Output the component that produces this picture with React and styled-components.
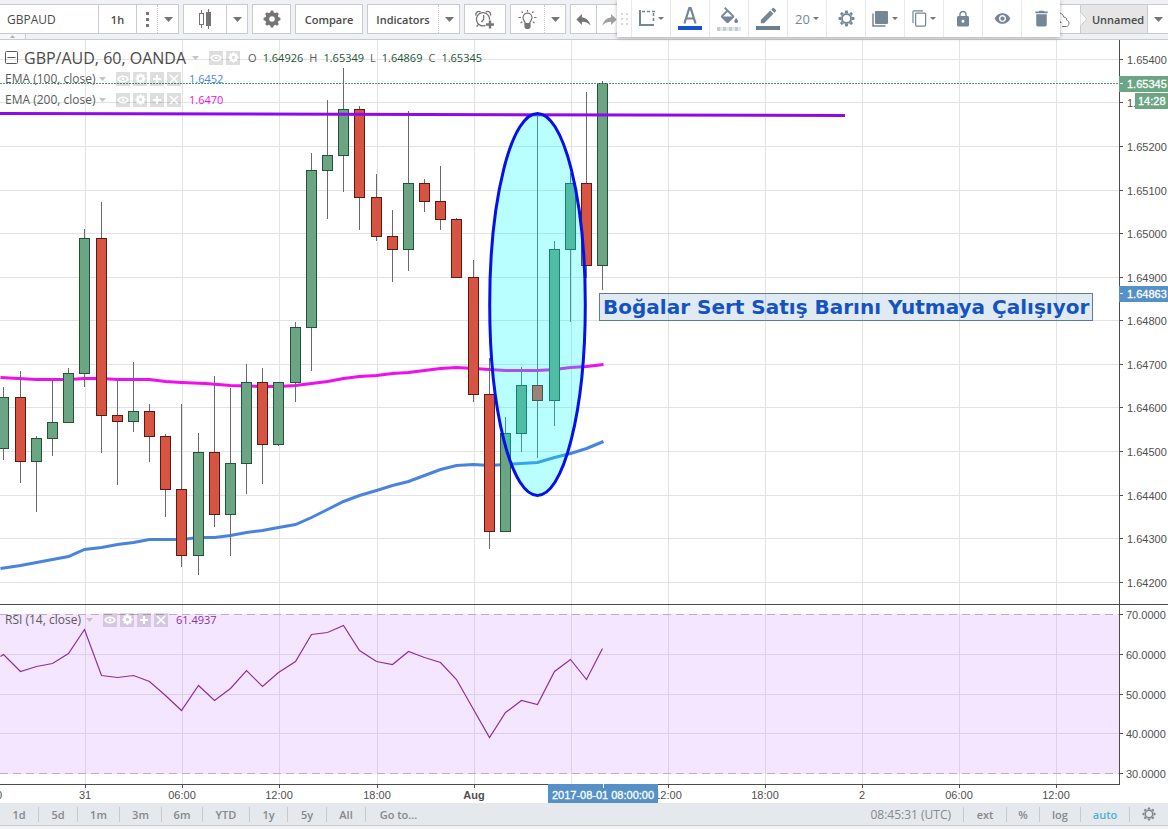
import React from "react";
import styled, { createGlobalStyle, css } from "styled-components";
import { MdLock, MdDelete, MdVisibility, MdFormatColorFill, MdEdit, MdReply } from "react-icons/md";

const ui = '"Open Sans", "Noto Sans", sans-serif';
const axisFont = '"Liberation Sans", Arial, sans-serif';

const GlobalStyle = createGlobalStyle`
  * { box-sizing: border-box; }
  body { margin: 0; background: #f1f3f6; font-family: ${ui}; font-size: 11px; color: #4a4a4a; overflow-x: hidden; }
  button, input { font: inherit; color: inherit; margin: 0; }
  svg { display: block; flex: none; }
`;

const Page = styled.div`
  position: relative;
  display: flex;
  flex-direction: column;
  min-height: 100vh;
`;

/* ---------- top toolbar ---------- */

const TopBar = styled.header`
  position: relative;
  display: flex;
  align-items: flex-start;
  gap: 4px;
  height: 40px;
  padding-top: 4px;
  background: #f0f1f5;
  border-bottom: 1px solid #c9cbcd;
`;

const Group = styled.div`
  display: flex;
  flex: none;
  height: 30px;
  background: #fff;
  border: 1px solid #c9cbcd;
  ${(p) => p.$flushLeft && css`border-left: 0;`}
  ${(p) => p.$flushRight && css`border-right: 0;`}
`;

const SymbolInput = styled.input`
  width: 98px;
  padding: 0 7px;
  border: 0;
  outline: 0;
  background: transparent;
  font-size: 12px;
`;

const ToolButton = styled.button`
  display: flex;
  align-items: center;
  justify-content: center;
  width: ${(p) => p.$w}px;
  padding: 0;
  border: 0;
  border-left: ${(p) => (p.$divider ? `1px ${p.$divider} #c9cbcd` : "0")};
  background: transparent;
  color: ${(p) => (p.$icon ? "#757575" : "#4a4a4a")};
  font-weight: 600;
`;

const Spacer = styled.div`
  flex: 1;
`;

const LayoutName = styled.button`
  position: relative;
  width: 67px;
  padding: 0 0 0 8px;
  border: 0;
  border-left: 1px solid #c9cbcd;
  background: #e6e6e6;
  color: #4a4a4a;
  font-weight: 600;
`;

const Notch = styled.svg`
  position: absolute;
  left: -1px;
  top: 7px;
`;

const CollapseTab = styled.button`
  position: absolute;
  left: 0;
  bottom: 0;
  display: flex;
  align-items: center;
  justify-content: center;
  width: 26px;
  height: 5px;
  padding: 0;
  border: 0;
  border-right: 1px solid #c9cbcd;
  background: #f6f7f9;
`;

/* ---------- floating drawing toolbar ---------- */

const FloatingBar = styled.div`
  position: absolute;
  top: 0;
  right: 108px;
  z-index: 3;
  display: flex;
  height: 37px;
  background: #fff;
  box-shadow: 0 1px 4px rgba(0, 0, 0, 0.3);
  color: #758696;
`;

const Grip = styled.div`
  display: grid;
  grid-template-columns: repeat(2, 2px);
  gap: 3px;
  align-content: center;
  justify-content: center;
  width: 14px;
`;

const GripDot = styled.i`
  height: 2px;
  background: #d5d8db;
`;

const FloatButton = styled.button`
  display: flex;
  flex-direction: ${(p) => (p.$stack ? "column" : "row")};
  align-items: center;
  justify-content: center;
  gap: ${(p) => (p.$stack ? 2 : 3)}px;
  width: 39px;
  padding: 0;
  border: 0;
  border-left: 1px solid #e6e8ea;
  background: transparent;
  font-size: 13px;
`;

const Swatch = styled.span`
  width: 24px;
  height: 4px;
  background: ${(p) => p.$color};
`;

/* ---------- chart ---------- */

const Pane = styled.section`
  position: relative;
  display: flex;
  background: #fff;
  ${(p) => p.$ruled && css`border-bottom: 1px solid #4c4c4c;`}
`;

const Plot = styled.svg`
  flex: 1;
  min-width: 0;
`;

const PriceScale = styled.svg`
  width: 49px;
  font: 11px ${axisFont};
  fill: #4f4f4f;
`;

const TimeScale = styled.svg`
  width: 100%;
  background: #fff;
  font: 11px ${axisFont};
  fill: #4f4f4f;
`;

const Legend = styled.div`
  position: absolute;
  left: 5px;
  top: ${(p) => p.$top}px;
`;

const LegendRow = styled.div`
  display: flex;
  align-items: center;
  height: 21px;
  white-space: nowrap;
  color: #5a5a5a;
`;

const SeriesTitle = styled.h1`
  margin: 0 6px 0 6px;
  font-size: 16px;
  line-height: 20px;
  font-weight: 400;
  color: #4a4a4a;
`;

const StudyName = styled.span`
  width: ${(p) => p.$w}px;
  font-size: 12px;
`;

const Chips = styled.div`
  display: flex;
  gap: 3px;
  margin-left: 10px;
`;

const Chip = styled.button`
  display: flex;
  align-items: center;
  justify-content: center;
  width: 14px;
  height: 14px;
  padding: 0;
  border: 0;
  background: rgba(0, 0, 0, 0.13);
  color: #fff;
`;

const Value = styled.span`
  margin-left: 8px;
  color: ${(p) => p.$color};
`;

const Ohlc = styled.span`
  display: flex;
  gap: 6px;
  margin-left: 8px;
  b { font-weight: 400; color: #225437; }
`;

const Note = styled.div`
  position: absolute;
  left: 599px;
  top: 253px;
  padding: 0 3px;
  border: 1px solid #5f7b8d;
  background: rgba(70, 130, 180, 0.17);
  color: #1553c0;
  font: bold 20px/26px "DejaVu Sans", Verdana, sans-serif;
  white-space: nowrap;
`;

/* ---------- bottom bar ---------- */

const BottomBar = styled.footer`
  display: flex;
  align-items: center;
  height: 23px;
  background: #e5e8ec;
  border-bottom: 1px solid #c9cbcd;
  color: #85888c;
`;

const BarButton = styled.button`
  display: flex;
  align-items: center;
  justify-content: center;
  width: ${(p) => p.$w}px;
  height: 15px;
  padding: 0;
  border: 0;
  border-left: ${(p) => (p.$first ? "0" : "1px solid #c6c9cd")};
  background: transparent;
  color: ${(p) => (p.$active ? "#4fb0d8" : "inherit")};
  font-weight: 600;
`;

const Clock = styled.time`
  margin-right: 12px;
  font-size: 12px;
`;

/* ---------- icons ---------- */

const Caret = ({ w = 9, up, color = "#757575" }) => {
  const h = Math.ceil(w / 2);
  return (
    <svg width={w} height={h} viewBox="0 0 10 5" preserveAspectRatio="none" fill={color}>
      <path d={up ? "M0 5L5 0L10 5Z" : "M0 0H10L5 5Z"} />
    </svg>
  );
};

const Gear = ({ size = 18, ring = 4 }) => (
  <svg width={size} height={size} viewBox="-9 -9 18 18" fill="none" stroke="currentColor">
    <circle r="4.8" strokeWidth={ring} />
    {[0, 45, 90, 135, 180, 225, 270, 315].map((a) => (
      <path key={a} d="M-1.9 -5.8L-1.2 -8.4H1.2L1.9 -5.8Z" fill="currentColor" stroke="none" transform={`rotate(${a})`} />
    ))}
  </svg>
);

const CandlesIcon = () => (
  <svg width="14" height="20" viewBox="0 0 14 20" fill="none" stroke="currentColor">
    <path d="M3.5 1V5M3.5 15V19M10.5 0V20" />
    <rect x="1.5" y="4.5" width="4" height="11" />
    <rect x="8.5" y="3.5" width="4" height="13" fill="currentColor" />
  </svg>
);

const AlarmIcon = () => (
  <svg width="20" height="19" viewBox="0 0 20 19" fill="none" stroke="currentColor" strokeWidth="1.3">
    <path d="M10.5 15.4A6.6 6.6 0 1 1 14.6 9.8M3.5 14.3L1.6 16.6M8.6 5V9.4L6.4 12" />
    <path d="M1 5.6C0.2 2.6 3 0.6 5.6 1.9M10.8 1.9C13.5 0.4 16.3 2.6 15.4 5.6" />
    <path d="M15 10.5V18.5M11 14.5H19" strokeWidth="2.4" />
  </svg>
);

const BulbIcon = () => (
  <svg width="19" height="19" viewBox="0 0 19 19" fill="none" stroke="currentColor" strokeWidth="1.2">
    <path d="M7.3 13.2C7.1 11.4 5 10.2 5 7.6A4.5 4.5 0 0 1 14 7.6C14 10.2 11.9 11.4 11.7 13.2" />
    <path d="M7 13.5H12V17L10.7 18.5H8.3L7 17Z" fill="currentColor" />
    <path d="M9.5 0V1.7M3.6 1.5L4.9 2.9M15.4 1.5L14.1 2.9M0.5 7.5H3M16 7.5H18.5M2.5 13L4.2 11.7M16.5 13L14.8 11.7" />
  </svg>
);

const CloudIcon = () => (
  <svg width="24" height="17" viewBox="0 0 24 17" fill="none" stroke="currentColor">
    <path d="M7 15.5H5A4 4 0 0 1 5 7.5C5 4 8 1.5 11.5 1.5C15 1.5 17.3 3.5 17.8 6.2C20 6 21 7.5 20.7 9.2C23.5 9.7 24 15 20.5 15.5H16" />
    <path d="M12 8L16 12H13.3V16.5H10.7V12H8Z" fill="currentColor" stroke="none" />
  </svg>
);

const ShapeIcon = () => (
  <svg width="17" height="17" viewBox="0 0 17 17" fill="none" stroke="currentColor" strokeWidth="2">
    <path d="M2 0V15H16" />
    <path d="M4 1.5H17M15.5 3V13" strokeDasharray="3 2" strokeWidth="1.6" />
  </svg>
);

const TextIcon = () => (
  <svg width="14" height="17" viewBox="0 0 14 17" fill="none" stroke="currentColor" strokeWidth="2.2">
    <path d="M1.4 16.5L6.3 1.2H7.700L12.600 16.500M3.400 11.500H10.600" />
  </svg>
);

const FrontIcon = () => (
  <svg width="17" height="16" viewBox="0 0 17 16">
    <rect x="3" y="0" width="13" height="13" rx="1" fill="currentColor" />
    <path d="M1 2.5V15H13.5" fill="none" stroke="currentColor" strokeWidth="1.5" />
  </svg>
);

const CopyIcon = () => (
  <svg width="15" height="17" viewBox="0 0 15 17" fill="none" stroke="currentColor" strokeWidth="1.2">
    <rect x="3.6" y="3.1" width="10" height="13" rx="1" />
    <path d="M1 13V2A1 1 0 0 1 2 0.8H11" />
  </svg>
);

const EyeGlyph = () => (
  <svg width="12" height="12" viewBox="0 0 12 12" fill="none" stroke="currentColor" strokeWidth="1.5">
    <path d="M1 6C3 2.2 9 2.2 11 6C9 9.8 3 9.8 1 6Z" />
    <circle cx="6" cy="6" r="1.3" fill="currentColor" stroke="none" />
  </svg>
);

const PlusGlyph = () => (
  <svg width="10" height="10" viewBox="0 0 10 10" stroke="currentColor" strokeWidth="2">
    <path d="M5 1V9M1 5H9" />
  </svg>
);

const CrossGlyph = () => (
  <svg width="10" height="10" viewBox="0 0 10 10" stroke="currentColor" strokeWidth="1.7">
    <path d="M1 1L9 9M9 1L1 9" />
  </svg>
);

const CollapseGlyph = () => (
  <svg width="13" height="13" viewBox="0 0 13 13" fill="none" stroke="#5a5a5a">
    <rect x="0.5" y="0.5" width="12" height="12" rx="1" />
    <path d="M2.5 6.5H10.5" />
  </svg>
);

/* ---------- chart data, in canvas pixels ---------- */

const TOP = 40;
const RSI_TOP = 605;

// x, high, body top, body bottom, low, rising
const candles = [
  [3, 387, 397, 449, 460, 1], [20, 371, 397, 462, 483, 0], [36, 436, 438, 462, 512, 1],
  [52, 380, 422, 439, 456, 1], [68, 368, 373, 423, 423, 1], [84, 229, 238, 374, 387, 1],
  [101, 202, 238, 416, 453, 0], [117, 380, 415, 422, 485, 0], [133, 362, 411, 422, 432, 1],
  [149, 404, 411, 437, 462, 0], [165, 434, 436, 490, 517, 0], [181, 404, 489, 556, 567, 0],
  [198, 433, 452, 556, 575, 1], [214, 376, 452, 515, 527, 0], [230, 388, 463, 515, 556, 1],
  [246, 364, 382, 464, 494, 1], [262, 368, 382, 445, 484, 0], [278, 382, 382, 445, 446, 1],
  [295, 322, 327, 383, 402, 1], [311, 153, 170, 328, 371, 1], [327, 100, 155, 171, 219, 1],
  [343, 68, 109, 156, 192, 1], [359, 106, 109, 198, 230, 0], [376, 174, 197, 237, 241, 0],
  [392, 210, 236, 250, 282, 0], [408, 111, 183, 250, 271, 1], [424, 179, 183, 202, 212, 0],
  [440, 166, 201, 220, 230, 0], [456, 218, 219, 278, 278, 0], [473, 260, 277, 395, 402, 0],
  [489, 358, 394, 532, 549, 0], [505, 417, 433, 532, 532, 1], [521, 367, 385, 434, 452, 1],
  [537, 114, 385, 401, 458, 0], [554, 241, 249, 401, 426, 1], [570, 173, 183, 250, 322, 1],
  [586, 92, 183, 266, 278, 0], [602, 81, 83, 266, 290, 1],
];

const ema200 = [
  [0, 377], [36, 379], [68, 379], [84, 378], [101, 378], [117, 379], [149, 379], [165, 381], [181, 382],
  [205, 383], [230, 385], [262, 386], [278, 386], [295, 385], [311, 383], [327, 381], [343, 378], [359, 376],
  [376, 375], [392, 373], [408, 372], [424, 370], [440, 368], [456, 367], [473, 368], [489, 369], [505, 370],
  [537, 370], [554, 369], [570, 367], [586, 366], [603, 364],
];

const ema100 = [
  [0, 568], [20, 565], [36, 562], [52, 559], [68, 556], [84, 549], [101, 547], [117, 544], [133, 542],
  [149, 539], [181, 539], [198, 537], [214, 537], [230, 535], [246, 532], [262, 530], [278, 527], [295, 524],
  [311, 517], [327, 509], [343, 501], [359, 495], [376, 490], [392, 485], [408, 481], [424, 475], [440, 469],
  [456, 465], [473, 464], [489, 465], [505, 464], [537, 462], [554, 457], [570, 453], [586, 448], [603, 441],
];

const rsi = [
  [0, 656], [3, 654], [20, 671], [36, 666], [52, 663], [68, 653], [84, 629], [101, 675], [117, 677], [133, 675],
  [149, 681], [165, 695], [181, 710], [198, 685], [214, 700], [230, 688], [246, 670], [262, 686], [278, 672],
  [295, 661], [311, 634], [327, 632], [343, 625], [359, 650], [376, 661], [392, 664], [408, 651], [424, 657],
  [440, 662], [456, 679], [489, 737], [505, 712], [521, 700], [537, 704], [554, 671], [570, 659], [586, 679],
  [602, 648],
];

const times = [
  [85, "31"], [182, "06:00"], [279, "12:00"], [377, "18:00"], [474, "Aug"], [571, ""], [668, "12:00"],
  [765, "18:00"], [862, "2"], [959, "06:00"], [1056, "12:00"],
];

const prices = Array.from({ length: 13 }, (_, i) => ({
  y: Math.floor(59.3 + 43.58 * i) - TOP,
  label: (1.654 - i * 0.001).toFixed(5),
}));

const rsiLevels = [[614, "70.0000"], [654, "60.0000"], [694, "50.0000"], [733, "40.0000"], [773, "30.0000"]];

const toPoints = (list, top) => list.map(([x, y]) => `${x + 0.5},${y - top + 0.5}`).join(" ");

const Candle = ({ d: [x, high, top, bottom, low, up] }) => (
  <g shapeRendering="crispEdges">
    <rect x={x} y={high - TOP} width="1" height={low - high} fill="#6a6a6c" />
    <rect
      x={x - 4.5}
      y={top - TOP + 0.5}
      width="10"
      height={bottom - top - 1}
      fill={up ? "#6ba583" : "#d75442"}
      stroke={up ? "#225437" : "#5b1a13"}
    />
  </g>
);

const PricePlot = () => (
  <Plot height="564" role="img" aria-label="GBP/AUD hourly candles">
    <g fill="#e3e3e3">
      {prices.map((p) => <rect key={p.y} x="0" y={p.y} width="100%" height="1" />)}
      {times.map(([x]) => <rect key={x} x={x} y="0" width="1" height="100%" />)}
    </g>
    <polyline points={toPoints(ema200, TOP)} fill="none" stroke="#f00eec" strokeWidth="3" />
    <polyline points={toPoints(ema100, TOP)} fill="none" stroke="#4a83dd" strokeWidth="3" />
    {candles.map((d) => <Candle key={d[0]} d={d} />)}
    <line x1="0" x2="100%" y1="43.5" y2="43.5" stroke="#4a9478" strokeDasharray="2 1" />
    <line x1="0" y1="73.5" x2="845" y2="75.5" stroke="#8f0aea" strokeWidth="3" />
    <ellipse cx="537.5" cy="264.4" rx="47.8" ry="191" fill="#00ffff" fillOpacity="0.27" stroke="#0610ea" strokeWidth="3" />
  </Plot>
);

const RsiPlot = () => (
  <Plot height="179" role="img" aria-label="Relative strength index">
    <g fill="#e3e3e3">
      {times.map(([x]) => <rect key={x} x={x} y="0" width="1" height="100%" />)}
    </g>
    <rect x="0" y="9" width="100%" height="160" fill="#f4e6ff" />
    <g fill="#dccfe9">
      {times.map(([x]) => <rect key={x} x={x} y="9" width="1" height="160" />)}
      {rsiLevels.slice(1, 4).map(([y]) => <rect key={y} x="0" y={y - RSI_TOP} width="100%" height="1" />)}
    </g>
    <line x1="0" x2="100%" y1="9.5" y2="9.5" stroke="#bdaec8" strokeDasharray="8 5" />
    <line x1="0" x2="100%" y1="168.5" y2="168.5" stroke="#bdaec8" strokeDasharray="8 5" />
    <polyline points={toPoints(rsi, RSI_TOP)} fill="none" stroke="#8e2f9f" strokeWidth="1.2" />
  </Plot>
);

const MenuCaret = () => <Caret w={7} color="#c4c4c4" />;

const StudyChips = ({ full }) => (
  <Chips>
    <Chip aria-label="Hide"><EyeGlyph /></Chip>
    <Chip aria-label="Format"><Gear size={11} ring={4} /></Chip>
    {full && <Chip aria-label="Add"><PlusGlyph /></Chip>}
    {full && <Chip aria-label="Remove"><CrossGlyph /></Chip>}
  </Chips>
);

const Study = ({ name, w, value, color }) => (
  <LegendRow>
    <StudyName $w={w}>{name}</StudyName>
    <MenuCaret />
    <StudyChips full />
    <Value $color={color}>{value}</Value>
  </LegendRow>
);

const ranges = [
  ["1d", 38], ["5d", 39], ["1m", 42], ["3m", 42], ["6m", 41], ["YTD", 47], ["1y", 38], ["5y", 39], ["All", 39], ["Go to...", 66],
];

const ohlc = [["O", "1.64926"], ["H", "1.65349"], ["L", "1.64869"], ["C", "1.65345"]];

export default function App() {
  return (
    <Page>
      <GlobalStyle />
      <TopBar>
        <Group $flushLeft>
          <SymbolInput aria-label="Symbol" defaultValue="GBPAUD" />
          <ToolButton $w={38} $divider="solid">1h</ToolButton>
          <ToolButton $w={21} $divider="solid" $icon aria-label="More intervals">
            <svg width="3" height="15" fill="currentColor">
              <rect width="3" height="3" /><rect y="6" width="3" height="3" /><rect y="12" width="3" height="3" />
            </svg>
          </ToolButton>
          <ToolButton $w={21} $divider="dotted" $icon aria-label="Interval menu"><Caret /></ToolButton>
        </Group>
        <Group>
          <ToolButton $w={42} $icon aria-label="Bar style"><CandlesIcon /></ToolButton>
          <ToolButton $w={21} $divider="solid" $icon aria-label="Bar style menu"><Caret /></ToolButton>
        </Group>
        <Group>
          <ToolButton $w={37} $icon aria-label="Settings"><Gear size={18} /></ToolButton>
        </Group>
        <Group>
          <ToolButton $w={66}>Compare</ToolButton>
        </Group>
        <Group>
          <ToolButton $w={70}>Indicators</ToolButton>
          <ToolButton $w={21} $divider="dotted" $icon aria-label="Indicator menu"><Caret /></ToolButton>
        </Group>
        <Group>
          <ToolButton $w={40} $icon aria-label="Add alert"><AlarmIcon /></ToolButton>
        </Group>
        <Group>
          <ToolButton $w={33} $icon aria-label="Ideas"><BulbIcon /></ToolButton>
          <ToolButton $w={21} $divider="dotted" $icon aria-label="Ideas menu"><Caret /></ToolButton>
        </Group>
        <Group>
          <ToolButton $w={25} $icon aria-label="Undo"><MdReply size={19} /></ToolButton>
          <ToolButton $w={26} $divider="solid" $icon aria-label="Redo">
            <MdReply size={19} transform="scale(-1 1)" color="#a0a0a0" />
          </ToolButton>
        </Group>
        <Spacer />
        <Group $flushRight>
          <ToolButton $w={44} $icon aria-label="Save"><CloudIcon /></ToolButton>
          <LayoutName>
            <Notch width="8" height="14" viewBox="0 0 8 14" fill="#fff" stroke="#c9cbcd">
              <path d="M0.5 0L6.5 7L0.5 14" />
            </Notch>
            Unnamed
          </LayoutName>
          <ToolButton $w={21} $divider="solid" $icon aria-label="Layout menu"><Caret /></ToolButton>
        </Group>
        <CollapseTab aria-label="Collapse"><Caret w={5} up color="#b0b0b0" /></CollapseTab>
      </TopBar>

      <FloatingBar>
        <Grip>{Array.from({ length: 6 }, (_, i) => <GripDot key={i} />)}</Grip>
        <FloatButton aria-label="Template"><ShapeIcon /><Caret w={6} /></FloatButton>
        <FloatButton aria-label="Text color" $stack><TextIcon /><Swatch $color="#1553cc" /></FloatButton>
        <FloatButton aria-label="Fill color" $stack>
          <MdFormatColorFill size={19} viewBox="2 0 20 18" />
          <Swatch $color="repeating-linear-gradient(90deg, #c3ccd3 0 3px, #e3e8eb 3px 6px)" />
        </FloatButton>
        <FloatButton aria-label="Line color" $stack><MdEdit size={17} viewBox="2 2 20 20" /><Swatch $color="#6b7f8e" /></FloatButton>
        <FloatButton>20<Caret w={6} /></FloatButton>
        <FloatButton aria-label="Properties"><Gear size={17} ring={2} /></FloatButton>
        <FloatButton aria-label="Order"><FrontIcon /><Caret w={6} /></FloatButton>
        <FloatButton aria-label="Clone"><CopyIcon /><Caret w={6} /></FloatButton>
        <FloatButton aria-label="Lock"><MdLock size={18} /></FloatButton>
        <FloatButton aria-label="Hide"><MdVisibility size={17} /></FloatButton>
        <FloatButton aria-label="Delete"><MdDelete size={21} /></FloatButton>
      </FloatingBar>

      <Pane $ruled>
        <PricePlot />
        <PriceScale height="564">
          <rect width="1" height="100%" fill="#4c4c4c" />
          {prices.map((p) => (
            <g key={p.y}>
              <rect x="1" y={p.y} width="3" height="1" />
              <text x="8" y={p.y + 5}>{p.label === "1.65300" ? "1." : p.label}</text>
            </g>
          ))}
          <rect y="36" width="49" height="16" fill="#6ba583" />
          <rect x="1" y="43" width="3" height="1" fill="#fff" />
          <text x="8" y="48" fill="#fff" stroke="#fff" strokeWidth="0.3">1.65345</text>
          <rect x="16" y="53" width="33" height="16" fill="#6ba583" />
          <text x="19" y="65" fill="#fff" stroke="#fff" strokeWidth="0.3">14:28</text>
          <rect y="246" width="49" height="16" fill="#5591c7" />
          <rect x="1" y="253" width="3" height="1" fill="#fff" />
          <text x="8" y="258" fill="#fff" stroke="#fff" strokeWidth="0.3">1.64863</text>
        </PriceScale>
        <Legend $top={7}>
          <LegendRow>
            <CollapseGlyph />
            <SeriesTitle>GBP/AUD, 60, OANDA</SeriesTitle>
            <MenuCaret />
            <StudyChips />
            <Ohlc>
              {ohlc.map(([k, v]) => <React.Fragment key={k}><span>{k}</span><b>{v}</b></React.Fragment>)}
            </Ohlc>
          </LegendRow>
          <Study name="EMA (100, close)" w={94} value="1.6452" color="#4a83dd" />
          <Study name="EMA (200, close)" w={94} value="1.6470" color="#e514e0" />
        </Legend>
        <Note>Boğalar Sert Satış Barını Yutmaya Çalışıyor</Note>
      </Pane>

      <Pane>
        <RsiPlot />
        <PriceScale height="179">
          <rect width="1" height="100%" fill="#4c4c4c" />
          {rsiLevels.map(([y, label]) => (
            <g key={y}>
              <rect x="1" y={y - RSI_TOP} width="3" height="1" />
              <text x="7" y={y - RSI_TOP + 5}>{label}</text>
            </g>
          ))}
        </PriceScale>
        <Legend $top={4}>
          <Study name="RSI (14, close)" w={81} value="61.4937" color="#8e2f9f" />
        </Legend>
      </Pane>

      <TimeScale height="19">
        <svg width="100%" height="1">
          <rect width="100%" height="1" fill="#4c4c4c" />
          <rect x="100%" width="48" height="1" fill="#fff" transform="translate(-48 0)" />
        </svg>
        <text x="2" y="15" textAnchor="end">0</text>
        {times.map(([x, label]) => (
          <g key={x}>
            <rect x={x} y="1" width="1" height="3" />
            <text x={x} y="15" textAnchor="middle" fontWeight={label === "Aug" ? 700 : 400}>{label}</text>
          </g>
        ))}
        <rect x="548" y="0" width="110" height="19" fill="#5591c7" />
        <rect x="603" y="0" width="1" height="4" fill="#fff" />
        <text x="603" y="15" textAnchor="middle" fill="#fff" stroke="#fff" strokeWidth="0.3">2017-08-01 08:00:00</text>
      </TimeScale>

      <BottomBar>
        {ranges.map(([label, w], i) => <BarButton key={label} $w={w} $first={i === 0}>{label}</BarButton>)}
        <Spacer />
        <Clock>08:45:31 (UTC)</Clock>
        <BarButton $w={43}>ext</BarButton>
        <BarButton $w={33}>%</BarButton>
        <BarButton $w={41}>log</BarButton>
        <BarButton $w={49} $active>auto</BarButton>
        <BarButton $w={39} aria-label="Scale settings"><Gear size={14} ring={2} /></BarButton>
      </BottomBar>
    </Page>
  );
}
